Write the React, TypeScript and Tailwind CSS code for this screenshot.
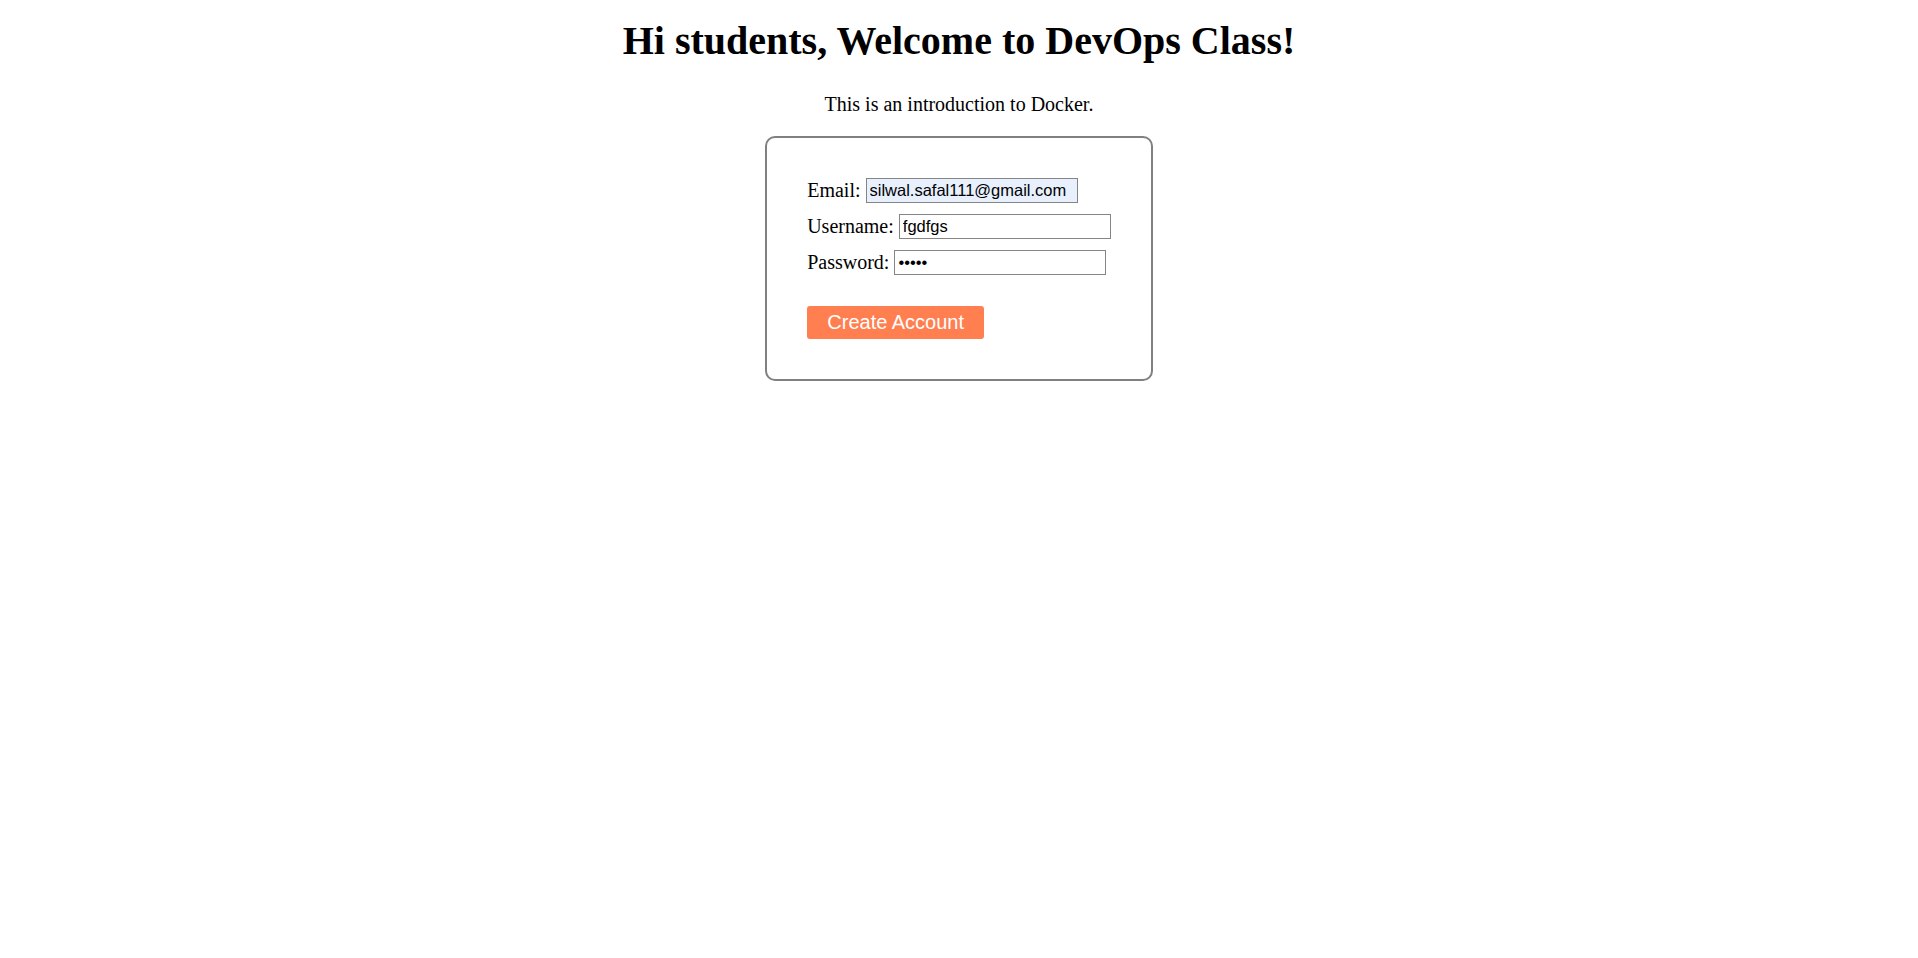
export default function App() {
  return (
    <div className="min-h-[958px] bg-white text-center text-black font-['Liberation_Serif',_'Times_New_Roman',serif]">
      <h1 className="pt-[18px] text-[40px] font-bold leading-[46px]">
        Hi students, Welcome to DevOps Class!
      </h1>
      <p className="mt-[29px] text-[20px] leading-[23px]">
        This is an introduction to Docker.
      </p>
      <SignupForm />
    </div>
  )
}

function SignupForm() {
  return (
    <form
      className="mt-[20px] inline-block rounded-[10px] border-2 border-[#808080] pt-[40px] pb-[40px] pl-[40px] pr-[40px] text-left"
      onSubmit={(e) => e.preventDefault()}
    >
      <Field label="Email:" type="email" value="silwal.safal111@gmail.com" autofill />
      <Field label="Username:" type="text" value="fgdfgs" />
      <Field label="Password:" type="password" value="12345" />
      <button
        type="submit"
        className="mt-[20px] h-[33px] w-[177px] rounded-[3px] bg-[#ff7f50] text-[20px] leading-[23px] text-white font-['Liberation_Sans',Arial,sans-serif]"
      >
        Create Account
      </button>
    </form>
  )
}

function Field({
  label,
  type,
  value,
  autofill,
}: {
  label: string
  type: string
  value: string
  autofill?: boolean
}) {
  return (
    <div className="mb-[11px] flex h-[25px] items-center gap-[5px] text-[20px] leading-[23px]">
      <label>{label}</label>
      <input
        type={type}
        defaultValue={value}
        className={
          "h-[25px] w-[212px] border border-[#858585] px-[3px] text-[16.5px] text-black outline-none font-['Liberation_Sans',Arial,sans-serif] " +
          (autofill ? "bg-[#e8f0fe]" : "bg-white")
        }
      />
    </div>
  )
}
